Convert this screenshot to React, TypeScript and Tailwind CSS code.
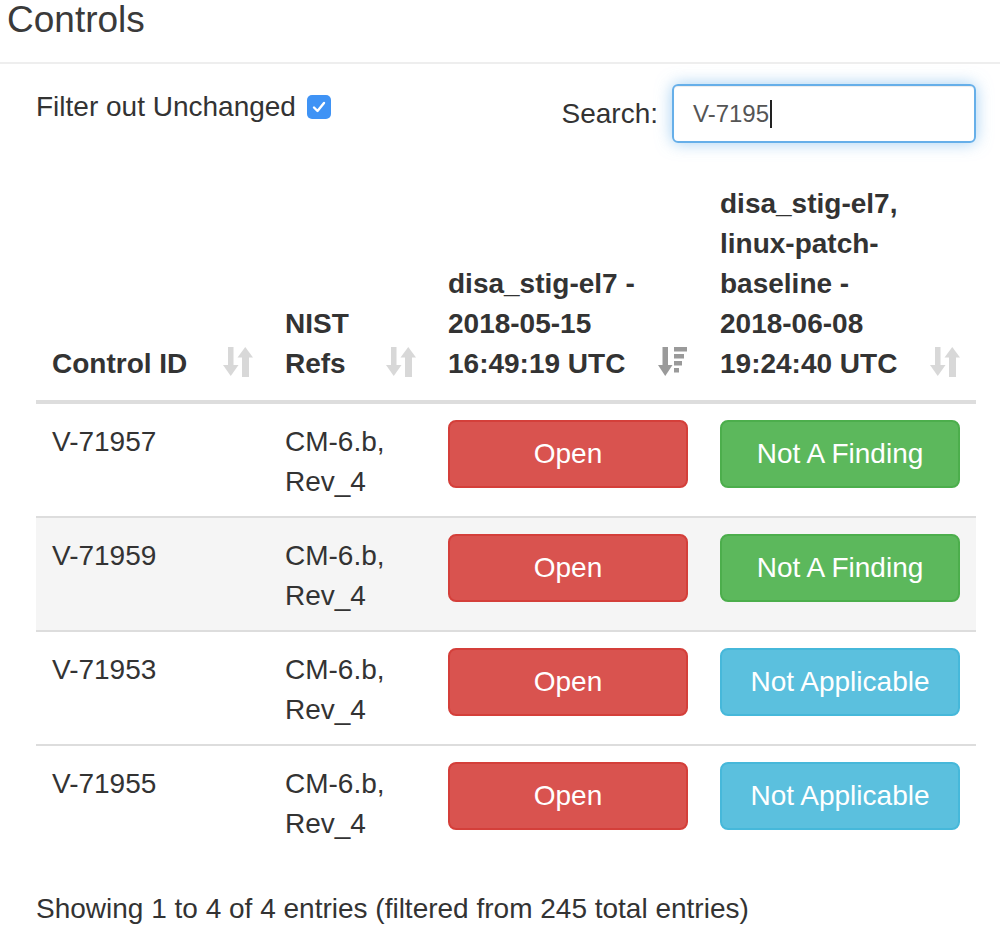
import React from "react";

function SortIcon({ active = false }: { active?: boolean }) {
  if (active) {
    return (
      <svg
        width="30"
        height="30"
        viewBox="0 0 30 30"
        className="absolute right-[16px] bottom-[23px]"
      >
        <g fill="#9a9a9a">
          <rect x="4.5" y="0" width="5.5" height="20" />
          <polygon points="0,18 14.5,18 7.25,29" />
          <rect x="16" y="0" width="13" height="4.5" />
          <rect x="16" y="7" width="10" height="4.5" />
          <rect x="16" y="14" width="8" height="4.5" />
          <rect x="16" y="21" width="5" height="4.5" />
        </g>
      </svg>
    );
  }
  return (
    <svg
      width="30"
      height="30"
      viewBox="0 0 30 30"
      className="absolute right-[16px] bottom-[23px]"
    >
      <g fill="#d8d8d8">
        <rect x="5" y="0" width="5.5" height="20" />
        <polygon points="0,18 15.5,18 7.75,29" />
        <polygon points="14.5,10.5 30,10.5 22.25,0" />
        <rect x="19" y="9" width="7" height="21" />
      </g>
    </svg>
  );
}

type Status = "open" | "naf" | "na";

const rows: { id: string; b: Status }[] = [
  { id: "V-71957", b: "naf" },
  { id: "V-71959", b: "naf" },
  { id: "V-71953", b: "na" },
  { id: "V-71955", b: "na" },
];

function StatusButton({ s }: { s: Status }) {
  if (s === "open") {
    return (
      <div className="w-full h-[68px] flex items-center justify-center rounded-[8px] border-2 border-[#d43f3a] bg-[#d9534f] text-white">
        Open
      </div>
    );
  }
  if (s === "naf") {
    return (
      <div className="w-full h-[68px] flex items-center justify-center rounded-[8px] border-2 border-[#4cae4c] bg-[#5cb85c] text-white">
        Not A Finding
      </div>
    );
  }
  return (
    <div className="w-full h-[68px] flex items-center justify-center rounded-[8px] border-2 border-[#46b8da] bg-[#5bc0de] text-white">
      Not Applicable
    </div>
  );
}

export default function App() {
  return (
    <div
      className="w-[1000px] h-[940px] bg-white text-[#333] text-[28px] leading-[40px] overflow-hidden"
      style={{ fontFamily: '"Liberation Sans", Arial, sans-serif' }}
    >
      <div className="h-[64px] border-b-2 border-[#eeeeee] pl-[7px]">
        <h3 className="text-[37px] leading-[40px] font-normal text-[#3a3a3a]">
          Controls
        </h3>
      </div>

      <div className="pl-[36px] pr-[24px]">
        <div className="mt-[20px] flex justify-between items-start">
          <div className="mt-[3px] flex items-center">
            <span>Filter out Unchanged</span>
            <span className="ml-[11px] w-[24px] h-[24px] rounded-[5px] bg-[#3f93f5] flex items-center justify-center">
              <svg width="16" height="16" viewBox="0 0 16 16">
                <path
                  d="M3 8.5 L6.5 12 L13 4"
                  fill="none"
                  stroke="white"
                  strokeWidth="2.4"
                  strokeLinecap="round"
                  strokeLinejoin="round"
                />
              </svg>
            </span>
          </div>
          <div className="flex items-center">
            <span>Search:</span>
            <div className="ml-[14px] w-[304px] h-[59px] rounded-[6px] border-2 border-[#66afe9] shadow-[inset_0_1px_1px_rgba(0,0,0,0.075),0_0_16px_rgba(102,175,233,0.6)] flex items-center pl-[19px] text-[24px] text-[#555]">
              <span>V-7195</span>
              <span className="ml-[1px] w-[2px] h-[28px] bg-[#222]" />
            </div>
          </div>
        </div>

        <table className="mt-[25px] w-[940px] table-fixed border-collapse">
          <colgroup>
            <col className="w-[233px]" />
            <col className="w-[163px]" />
            <col className="w-[272px]" />
            <col className="w-[272px]" />
          </colgroup>
          <thead>
            <tr className="border-b-4 border-[#dddddd]">
              <th className="relative align-bottom text-left font-bold pt-[16px] pb-[16px] pl-[16px] pr-[60px]">
                Control ID
                <SortIcon />
              </th>
              <th className="relative align-bottom text-left font-bold pt-[16px] pb-[16px] pl-[16px] pr-[60px]">
                NIST
                <br />
                Refs
                <SortIcon />
              </th>
              <th className="relative align-bottom text-left font-bold pt-[16px] pb-[16px] pl-[16px] pr-[20px]">
                disa_stig-el7 -
                <br />
                2018-05-15
                <br />
                16:49:19 UTC
                <SortIcon active />
              </th>
              <th className="relative align-bottom text-left font-bold pt-[16px] pb-[16px] pl-[16px] pr-[20px]">
                disa_stig-el7,
                <br />
                linux-patch-
                <br />
                baseline -
                <br />
                2018-06-08
                <br />
                19:24:40 UTC
                <SortIcon />
              </th>
            </tr>
          </thead>
          <tbody>
            {rows.map((r, i) => (
              <tr
                key={r.id}
                className={`${i > 0 ? "border-t-2 border-[#dddddd]" : ""} ${
                  i === 1 ? "bg-[#f5f5f5]" : "bg-white"
                }`}
              >
                <td className="align-top pt-[18px] pb-[14px] px-[16px]">{r.id}</td>
                <td className="align-top pt-[18px] pb-[14px] px-[16px]">
                  CM-6.b,
                  <br />
                  Rev_4
                </td>
                <td className="align-top p-[16px]">
                  <StatusButton s="open" />
                </td>
                <td className="align-top p-[16px]">
                  <StatusButton s={r.b} />
                </td>
              </tr>
            ))}
          </tbody>
        </table>

        <div className="mt-[31px]">
          Showing 1 to 4 of 4 entries (filtered from 245 total entries)
        </div>
      </div>
    </div>
  );
}
